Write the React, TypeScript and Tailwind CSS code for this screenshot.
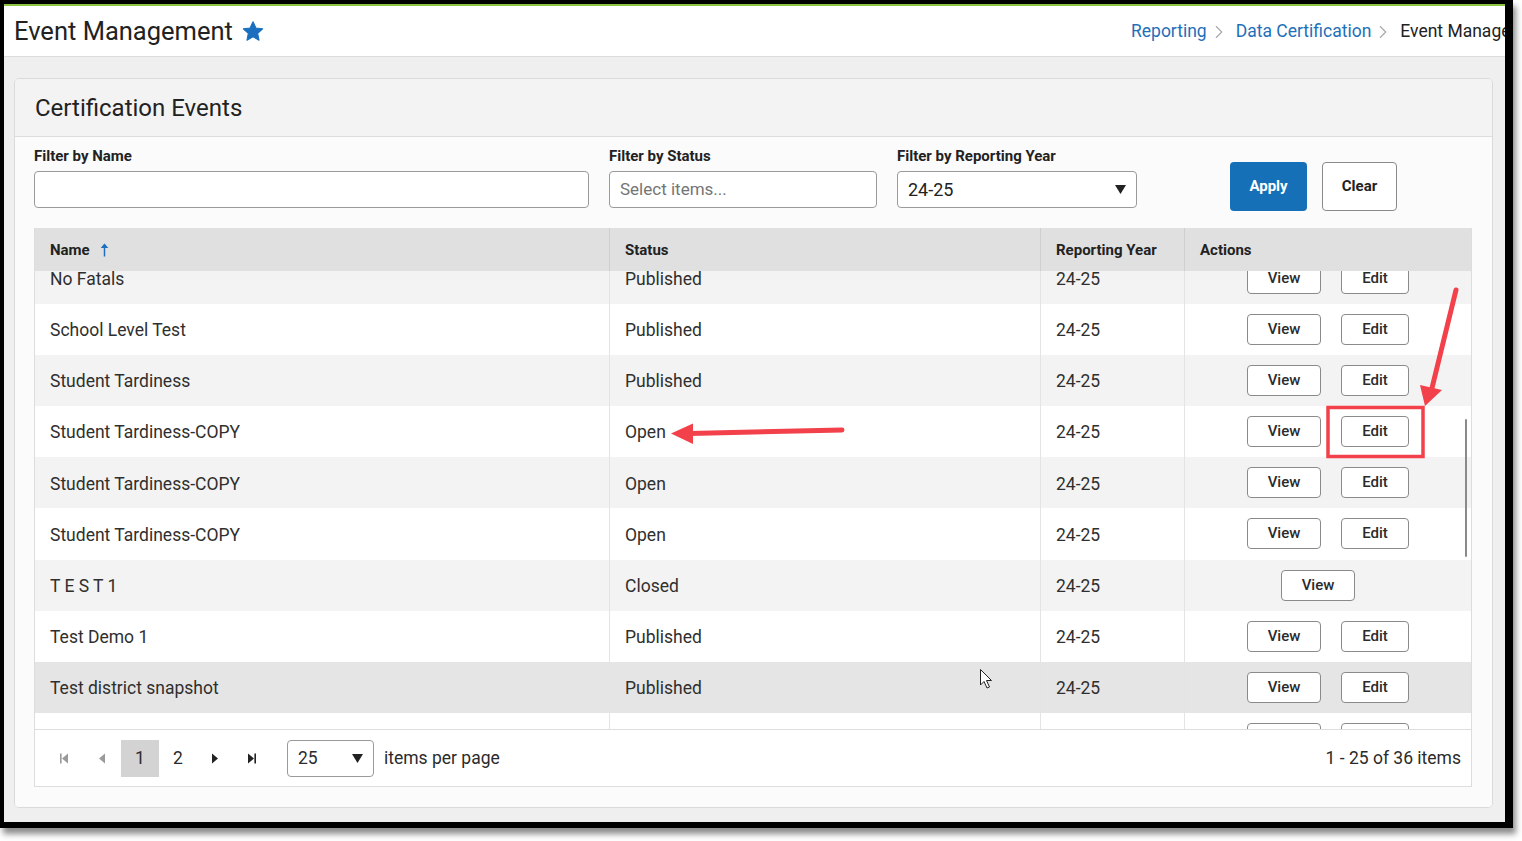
import { ChevronRight } from 'lucide-react';

type Row = { name: string; status: string; year: string; edit: boolean; tone: 'alt' | 'plain' | 'hover' };

const rows: Row[] = [
    { name: 'No Fatals', status: 'Published', year: '24-25', edit: true, tone: 'alt' },
    { name: 'School Level Test', status: 'Published', year: '24-25', edit: true, tone: 'plain' },
    { name: 'Student Tardiness', status: 'Published', year: '24-25', edit: true, tone: 'alt' },
    { name: 'Student Tardiness-COPY', status: 'Open', year: '24-25', edit: true, tone: 'plain' },
    { name: 'Student Tardiness-COPY', status: 'Open', year: '24-25', edit: true, tone: 'alt' },
    { name: 'Student Tardiness-COPY', status: 'Open', year: '24-25', edit: true, tone: 'plain' },
    { name: 'T E S T 1', status: 'Closed', year: '24-25', edit: false, tone: 'alt' },
    { name: 'Test Demo 1', status: 'Published', year: '24-25', edit: true, tone: 'plain' },
    { name: 'Test district snapshot', status: 'Published', year: '24-25', edit: true, tone: 'hover' },
    { name: 'Test school snapshot', status: 'Published', year: '24-25', edit: true, tone: 'plain' },
];

const toneClass = {
    alt: 'bg-[#f3f3f3]',
    plain: 'bg-white',
    hover: 'bg-[#e5e5e5]',
};

const SmallButton = ({ label, width }: { label: string; width: string }) => (
    <button
        className={`${width} h-[31px] rounded-[4px] border border-[#8a8a8a] bg-white text-[15px] font-medium text-[#2b2b2b] leading-none`}
    >
        {label}
    </button>
);

const Caret = () => (
    <svg width="11" height="9" viewBox="0 0 11 9">
        <path d="M0 0 H11 L5.5 9 Z" fill="#222" />
    </svg>
);

const PagerIcon = ({ kind, color }: { kind: 'first' | 'prev' | 'next' | 'last'; color: string }) => (
    <svg width="10" height="11" viewBox="0 0 10 11">
        {kind === 'first' && (
            <>
                <rect x="1" y="0.5" width="1.6" height="10" fill={color} />
                <path d="M9 0.5 V10.5 L3 5.5 Z" fill={color} />
            </>
        )}
        {kind === 'prev' && <path d="M8 0.5 V10.5 L2 5.5 Z" fill={color} />}
        {kind === 'next' && <path d="M2 0.5 V10.5 L8 5.5 Z" fill={color} />}
        {kind === 'last' && (
            <>
                <path d="M1 0.5 V10.5 L7 5.5 Z" fill={color} />
                <rect x="7.4" y="0.5" width="1.6" height="10" fill={color} />
            </>
        )}
    </svg>
);

const Annotations = () => (
    <svg className="absolute inset-0 pointer-events-none" width="1522" height="841" viewBox="0 0 1522 841">
        {/* red box round the Edit button */}
        <rect x="1328" y="407.5" width="95" height="49" fill="none" stroke="#f2414a" strokeWidth="3.5" />
        {/* down arrow */}
        <line x1="1456" y1="290" x2="1432" y2="388" stroke="#f2414a" strokeWidth="5" strokeLinecap="round" />
        <path d="M1425 406 L1420 385 L1442 390 Z" fill="#f2414a" />
        {/* left arrow */}
        <line x1="842" y1="430" x2="690" y2="433.5" stroke="#f2414a" strokeWidth="5" strokeLinecap="round" />
        <path d="M671 433.5 L693 423.5 L693 444 Z" fill="#f2414a" />
        {/* mouse cursor */}
        <path
            d="M980.5 669.5 L980.5 685 L984 681.5 L987 688 L989.5 687 L986.5 680.5 L991.5 680.5 Z"
            fill="#fff"
            stroke="#222"
            strokeWidth="1"
            strokeLinejoin="round"
        />
    </svg>
);

export default function App() {
    return (
        <div className="relative w-[1522px] h-[841px] bg-white overflow-hidden font-['Roboto','Liberation_Sans',sans-serif] text-[#2b2b2b]">
            <div className="w-[1513px] h-[828px] border-t-4 border-l-4 border-r-8 border-b-[6px] border-black shadow-[3px_6px_6px_rgba(0,0,0,0.45)] flex flex-col">
                <div className="h-[2px] shrink-0 bg-[#8cc43f]" />

                {/* Page header */}
                <header className="h-[51px] shrink-0 bg-white border-b border-[#dcdcdc] flex items-center pl-[10px] pt-[2px] overflow-hidden">
                    <h1 className="text-[25.5px] leading-none text-[#222] whitespace-nowrap">Event Management</h1>
                    <svg className="ml-[9px] -mt-[2px] shrink-0" width="22" height="21" viewBox="0 0 24 23">
                        <path
                            d="M12 0.8 L15.2 7.6 L22.6 8.5 L17.1 13.6 L18.6 21 L12 17.3 L5.4 21 L6.9 13.6 L1.4 8.5 L8.8 7.6 Z"
                            fill="#1b6fbe"
                            stroke="#1b6fbe"
                            strokeWidth="1.2"
                            strokeLinejoin="round"
                        />
                    </svg>
                    <nav className="ml-auto w-[374px] shrink-0 flex items-center whitespace-nowrap text-[17.5px] leading-none">
                        <span className="shrink-0 text-[#1f6fb9]">Reporting</span>
                        <ChevronRight size={22} strokeWidth={1.2} className="shrink-0 ml-[1px] mr-[6px] text-[#a8a8a8]" />
                        <span className="shrink-0 text-[#1f6fb9]">Data Certification</span>
                        <ChevronRight size={22} strokeWidth={1.2} className="shrink-0 ml-[1px] mr-[6px] text-[#a8a8a8]" />
                        <span className="shrink-0 text-[#222]">Event Management</span>
                    </nav>
                </header>

                <main className="flex-1 bg-[#efefef] pt-[21px] pl-[10px] pr-[12px] pb-[14px]">
                    <section className="h-full rounded-[5px] border border-[#dadada] bg-white flex flex-col overflow-hidden">
                        <div className="h-[58px] shrink-0 bg-[#f3f3f3] border-b border-[#dddddd] flex items-center pl-[20px]">
                            <h2 className="text-[24px] leading-none text-[#222]">Certification Events</h2>
                        </div>

                        <div className="flex-1 pl-[19px] pr-[20px] pt-[9px] bg-[#fbfbfb] flex flex-col">
                            {/* Filters */}
                            <div className="flex items-start h-[65px]">
                                <div className="w-[555px]">
                                    <div className="h-[20px] leading-[20px] text-[15px] font-bold text-[#222]">Filter by Name</div>
                                    <div className="mt-[5px] h-[37px] rounded-[4px] border border-[#9a9a9a] bg-white" />
                                </div>
                                <div className="w-[268px] ml-[20px]">
                                    <div className="h-[20px] leading-[20px] text-[15px] font-bold text-[#222]">Filter by Status</div>
                                    <div className="mt-[5px] h-[37px] rounded-[4px] border border-[#9a9a9a] bg-white flex items-center pl-[10px] text-[17px] text-[#757575]">
                                        Select items...
                                    </div>
                                </div>
                                <div className="w-[240px] ml-[20px]">
                                    <div className="h-[20px] leading-[20px] text-[15px] font-bold text-[#222]">Filter by Reporting Year</div>
                                    <div className="mt-[5px] h-[37px] rounded-[4px] border border-[#9a9a9a] bg-white flex items-center justify-between pl-[10px] pr-[10px] text-[18px] text-[#222]">
                                        <span>24-25</span>
                                        <Caret />
                                    </div>
                                </div>
                                <button className="ml-[93px] mt-[16px] w-[77px] h-[49px] rounded-[4px] bg-[#1570b8] text-white text-[15px] font-bold">
                                    Apply
                                </button>
                                <button className="ml-[15px] mt-[16px] w-[75px] h-[49px] rounded-[4px] border border-[#8a8a8a] bg-white text-[#222] text-[15px] font-bold">
                                    Clear
                                </button>
                            </div>

                            {/* Grid */}
                            <div className="mt-[17px] border-x border-[#dddddd] bg-white">
                                <div className="grid grid-cols-[575px_431px_144px_286px] h-[43px] bg-[#e0e0e0] text-[15px] font-bold text-[#222]">
                                    <div className="flex items-center pl-[15px] pt-[1px] border-r border-[#cfcfcf]">
                                        Name
                                        <svg className="ml-[10px]" width="9" height="14" viewBox="0 0 9 14">
                                            <path d="M4.5 1.5 V13.5" stroke="#1b6fbe" strokeWidth="1.5" />
                                            <path d="M4.5 0.5 L8.3 5 H0.7 Z" fill="#1b6fbe" />
                                        </svg>
                                    </div>
                                    <div className="flex items-center pl-[15px] pt-[1px] border-r border-[#cfcfcf]">Status</div>
                                    <div className="flex items-center pl-[15px] pt-[1px] border-r border-[#cfcfcf]">Reporting Year</div>
                                    <div className="flex items-center pl-[15px] pt-[1px]">Actions</div>
                                </div>

                                <div className="relative h-[458px] overflow-hidden">
                                    <div className="-mt-[18.6px]">
                                        {rows.map((r, i) => (
                                            <div
                                                key={i}
                                                className={`grid grid-cols-[575px_431px_144px_286px] h-[51.2px] text-[17.5px] text-[#2f2f2f] ${toneClass[r.tone]}`}
                                            >
                                                <div className="flex items-center pl-[15px] pt-[2px] border-r border-[#e4e4e4]">{r.name}</div>
                                                <div className="flex items-center pl-[15px] pt-[2px] border-r border-[#e4e4e4]">{r.status}</div>
                                                <div className="flex items-center pl-[15px] pt-[2px] border-r border-[#e4e4e4]">{r.year}</div>
                                                {r.edit ? (
                                                    <div className="flex items-center pl-[62px] gap-[20px]">
                                                        <SmallButton label="View" width="w-[74px]" />
                                                        <SmallButton label="Edit" width="w-[68px]" />
                                                    </div>
                                                ) : (
                                                    <div className="flex items-center pl-[96px]">
                                                        <SmallButton label="View" width="w-[74px]" />
                                                    </div>
                                                )}
                                            </div>
                                        ))}
                                    </div>
                                    {/* scrollbar thumb */}
                                    <div className="absolute right-[4px] top-[148px] w-[2px] h-[138px] bg-[#8a8a8a] rounded-full" />
                                </div>

                                {/* Pager */}
                                <div className="h-[58px] border-y border-[#dddddd] bg-white flex items-center pl-[10px] pr-[10px] text-[17.5px] text-[#2b2b2b]">
                                    <div className="w-[38px] h-[37px] flex items-center justify-center">
                                        <PagerIcon kind="first" color="#9a9a9a" />
                                    </div>
                                    <div className="w-[38px] h-[37px] flex items-center justify-center">
                                        <PagerIcon kind="prev" color="#9a9a9a" />
                                    </div>
                                    <div className="w-[38px] h-[37px] flex items-center justify-center bg-[#d3d3d3]">1</div>
                                    <div className="w-[38px] h-[37px] flex items-center justify-center">2</div>
                                    <div className="w-[36px] h-[37px] flex items-center justify-center">
                                        <PagerIcon kind="next" color="#222" />
                                    </div>
                                    <div className="w-[38px] h-[37px] flex items-center justify-center">
                                        <PagerIcon kind="last" color="#222" />
                                    </div>
                                    <div className="ml-[16px] w-[87px] h-[37px] rounded-[4px] border border-[#9a9a9a] flex items-center justify-between pl-[10px] pr-[10px]">
                                        <span>25</span>
                                        <Caret />
                                    </div>
                                    <span className="ml-[10px]">items per page</span>
                                    <span className="ml-auto">1 - 25 of 36 items</span>
                                </div>
                            </div>
                        </div>
                    </section>
                </main>
            </div>
            <Annotations />
        </div>
    );
}
